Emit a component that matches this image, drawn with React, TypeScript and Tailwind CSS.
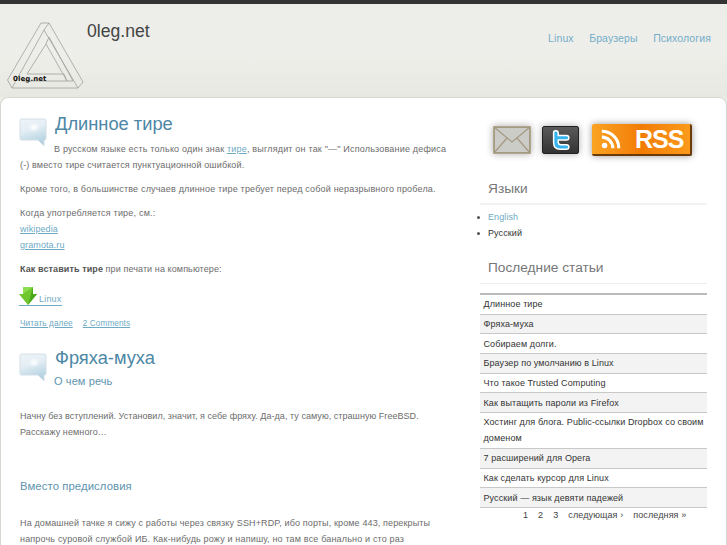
const Bubble = () => (
  <svg width="28" height="29" viewBox="0 0 28 29" className="shrink-0">
    <defs>
      <linearGradient id="bub" x1="0" y1="0" x2="0.3" y2="1">
        <stop offset="0" stopColor="#eef4f8" />
        <stop offset="0.45" stopColor="#e4eef4" />
        <stop offset="1" stopColor="#b4d2e2" />
      </linearGradient>
      <radialGradient id="bubg" cx="0.55" cy="0.4" r="0.3">
        <stop offset="0" stopColor="#ffffff" />
        <stop offset="1" stopColor="#ffffff" stopOpacity="0" />
      </radialGradient>
    </defs>
    <path d="M2.5 1 H25.5 Q27 1 27 2.5 V20.5 Q27 22 25.5 22 H25 V28 L19 22 H2.5 Q1 22 1 20.5 V2.5 Q1 1 2.5 1 Z" fill="url(#bub)" stroke="#d4dfe6" strokeWidth="1" />
    <rect x="4" y="3" width="20" height="16" fill="url(#bubg)" />
  </svg>
);

const Logo = () => (
  <svg width="78" height="68" viewBox="6 22 78 68" className="shrink-0">
    <g fill="none" stroke="#a0a09c" strokeWidth="0.8">
      <path d="M41 23 L49 23 L83 82 L78 88 L12 88 L7.5 80 Z" />
      <path d="M49 23 L44 30 L78 88" />
      <path d="M49 37 L73 81 L22 81" />
      <path d="M44 30 L12 88" />
      <path d="M46 44 L27 74 L64 74 L67 81 Z" />
      <path d="M49 37 L46 44" />
    </g>
    <text x="13" y="81" fontSize="7" fontWeight="700" fontFamily="'DejaVu Sans', sans-serif" fill="#111">0leg.net</text>
  </svg>
);

const Env = () => (
  <div className="shadow-[0_0_7px_#aaa] leading-[0]">
    <svg width="38" height="28" viewBox="0 0 38 28">
      <rect x="1" y="1" width="36" height="26" fill="#cbcbc7" stroke="#978a6b" strokeWidth="1.5" />
      <path d="M1 1 L19 16 L37 1 M1 27 L14 12 M37 27 L24 12" fill="none" stroke="#a59a80" strokeWidth="1.2" />
    </svg>
  </div>
);

const Twitter = () => (
  <div className="w-[37px] h-[28px] rounded-[2px] bg-gradient-to-b from-[#5a5a5a] to-[#333] border border-[#222] flex items-center justify-center shadow-[0_0_7px_#aaa]">
    <svg width="24" height="21" viewBox="0 0 26 22">
      <path d="M5 2 Q5 0.5 7.5 0.5 Q10 0.5 10 3 V5.5 H19 Q21.5 5.5 21.5 8 Q21.5 10.5 19 10.5 H10 V12.5 Q10 15.5 13 15.5 H19 Q21.5 15.5 21.5 18 Q21.5 20.5 19 20.5 H12 Q5 20.5 5 13.5 Z" fill="#35b4ee" stroke="#fff" strokeWidth="1.6" />
    </svg>
  </div>
);

const Rss = () => (
  <div className="w-[100px] h-[32px] rounded-[2px] bg-gradient-to-r from-[#fba322] via-[#f27c05] to-[#fa9a1a] border-b-2 border-r-2 border-[#6b3a08] shadow-[0_0_7px_#999] flex items-center pl-[8px] gap-[13px]">
    <svg width="22" height="22" viewBox="0 0 24 24">
      <circle cx="5" cy="19" r="3" fill="#fff" />
      <path d="M2 10 A12 12 0 0 1 14 22 M2 3.5 A18.5 18.5 0 0 1 20.5 22" fill="none" stroke="#fff" strokeWidth="3.4" />
    </svg>
    <span className="text-white font-bold text-[25px] leading-none tracking-[-1px]">RSS</span>
  </div>
);

const Arrow = () => (
  <svg width="18" height="19" viewBox="0 0 18 19" className="shrink-0">
    <path d="M4 1 H14 V8 H18 L9 19 L0 8 H4 Z" fill="#6fc72d" />
    <path d="M14 1 V8 H18 L9 19 Z" fill="#4aa91c" />
    <path d="M4 1 H14 L4 8 Z" fill="#8edc50" />
  </svg>
);

const A = ({ children }: { children: React.ReactNode }) => (
  <a className="text-[#6eaac4] underline">{children}</a>
);

const recent = [
  "Длинное тире",
  "Фряха-муха",
  "Собираем долги.",
  "Браузер по умолчанию в Linux",
  "Что такое Trusted Computing",
  "Как вытащить пароли из Firefox",
  "Хостинг для блога. Public-ссылки Dropbox со своим доменом",
  "7 расширений для Opera",
  "Как сделать курсор для Linux",
  "Русский — язык девяти падежей",
];

export default function App() {
  return (
    <div className="h-[545px] w-[727px] overflow-hidden bg-[#ecece8] border-t-4 border-[#333] font-['Liberation_Sans',sans-serif] text-[#6c6c6c] text-[9px] tracking-[0.1px]">
      <header className="h-[93px] flex pl-[6px] pt-[18px] pr-[16px] bg-gradient-to-b from-[#ecece8] via-[#eeeeea] to-[#e8e8e3]">
        <Logo />
        <div className="ml-[3px] -mt-[3px] text-[17.6px] tracking-normal leading-[24px] text-[#444]">0leg.net</div>
        <nav className="ml-auto flex gap-[15.5px] pt-[9px] text-[10.5px] leading-[14px] text-[#74aec9]">
          <span>Linux</span><span>Браузеры</span><span>Психология</span>
        </nav>
      </header>
      <div className="h-[448px] bg-white rounded-t-[8px] border-t border-x border-[#d8d8d2] flex overflow-hidden">
        <main className="w-[479px] shrink-0 pl-[19px] pt-[14px] leading-[16px]">
          <div className="pl-[35px] relative">
            <div className="absolute left-0 top-[6px] -ml-[1px]"><Bubble /></div>
            <h2 className="text-[18.3px] tracking-normal leading-[24px] text-[#4c87a5]">Длинное тире</h2>
          </div>
          <p className="pl-[34px] mt-[5px] tracking-[0.19px]">В русском языке есть только один знак <A>тире</A>, выглядит он так "—" Использование дефиса</p>
          <p className="tracking-[0.14px]">(-) вместо тире считается пунктуационной ошибкой.</p>
          <p className="mt-[8px] tracking-[0.18px]">Кроме того, в большинстве случаев длинное тире требует перед собой неразрывного пробела.</p>
          <p className="mt-[8px] tracking-[0.2px]">Когда употребляется тире, см.:</p>
          <p><A>wikipedia</A></p>
          <p><A>gramota.ru</A></p>
          <p className="mt-[8px]"><b className="text-[#555]">Как вставить тире</b> при печати на компьютере:</p>
          <div className="mt-[9px] h-[20px] flex -ml-px">
            <a className="flex items-end gap-[2px] h-[20px] border-b border-[#6eaac4] text-[#6eaac4]">
              <Arrow />
              <span className="leading-[12px] tracking-[0.2px]">Linux</span>
            </a>
          </div>
          <p className="mt-[10px] text-[8.2px] flex gap-[10px]"><A>Читать далее</A><A>2 Comments</A></p>
          <div className="pl-[35px] relative mt-[14px]">
            <div className="absolute left-0 top-[7px] -ml-[1px]"><Bubble /></div>
            <h2 className="text-[18.3px] tracking-normal leading-[24px] text-[#4c87a5]">Фряха-муха</h2>
            <div className="mt-[1px] -ml-px text-[11px] leading-[20px] text-[#5e94ae]">О чем речь</div>
          </div>
          <p className="mt-[17px] tracking-[0.05px]">Начну без вступлений. Установил, значит, я себе фряху. Да-да, ту самую, страшную FreeBSD.</p>
          <p>Расскажу немного…</p>
          <div className="mt-[38px] text-[11.3px] leading-[16px] text-[#5e94ae]">Вместо предисловия</div>
          <p className="mt-[21px] tracking-[0.13px]">На домашней тачке я сижу с работы через связку SSH+RDP, ибо порты, кроме 443, перекрыты</p>
          <p className="tracking-[0.17px]">напрочь суровой службой ИБ. Как-нибудь рожу и напишу, но там все банально и сто раз</p>
        </main>
        <aside className="w-[227px] shrink-0 pt-[25px]">
          <div className="flex items-center pl-[13px] h-[34px]">
            <div className="mr-[11px]"><Env /></div>
            <div className="mr-[13px]"><Twitter /></div>
            <Rss />
          </div>
          <h3 className="mt-[22px] pl-[8px] pb-[4px] border-b-2 border-[#f2f2f2] text-[13.7px] tracking-normal leading-[20px] text-[#777]">Языки</h3>
          <ul className="mt-[4px] leading-[16px] text-[#333]">
            <li className="flex items-center -ml-[3px] gap-[8px]"><span className="w-[3px] h-[3px] rounded-full bg-[#555]" /><span className="text-[#6eaac4]">English</span></li>
            <li className="flex items-center -ml-[3px] gap-[8px]"><span className="w-[3px] h-[3px] rounded-full bg-[#555]" /><span>Русский</span></li>
          </ul>
          <h3 className="mt-[17px] pl-[8px] pb-[5px] border-b border-[#eee] text-[13.7px] tracking-normal leading-[20px] text-[#777]">Последние статьи</h3>
          <div className="mt-[9px] border-t-2 border-[#bbb]">
            {recent.map((r, i) => (
              <div key={r} className={`px-[3.5px] py-[1.35px] border-b border-[#c8c8c8] leading-[16px] text-[#333] ${i % 2 ? "bg-[#f3f3f3]" : "bg-white"}`}>{r}</div>
            ))}
          </div>
          <div className="flex pl-[43px] gap-[10px] leading-[16px] text-[#444] -mt-[1px]">
            <span>1</span><span>2</span><span>3</span><span>следующая ›</span><span>последняя »</span>
          </div>
        </aside>
      </div>
    </div>
  );
}
